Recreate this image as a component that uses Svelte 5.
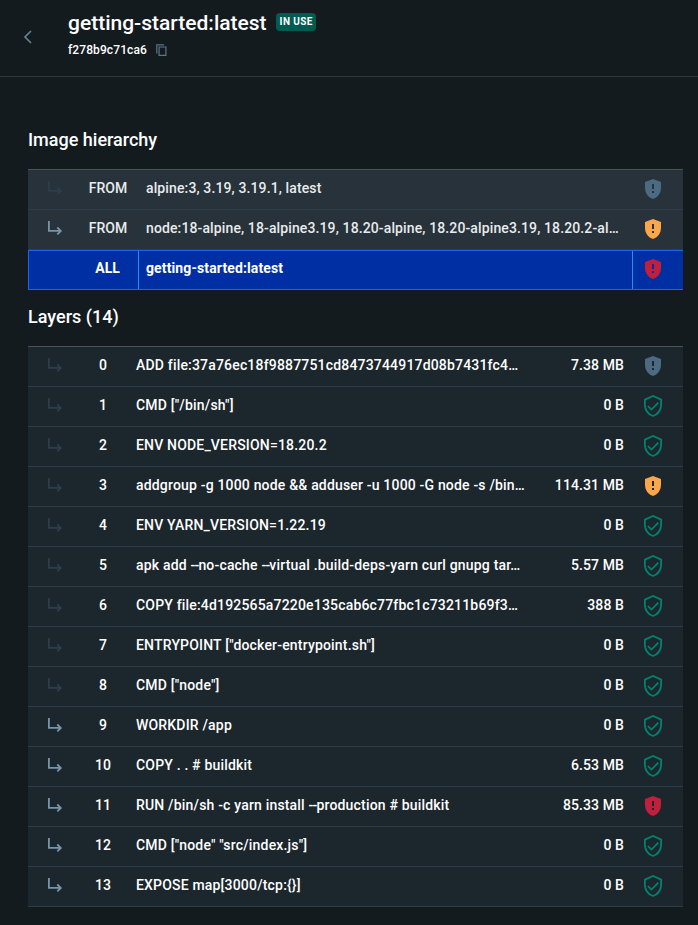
<script>
  const hierarchy = [
    { kind: 'FROM', name: 'alpine:3, 3.19, 3.19.1, latest', faded: true, status: 'unknown' },
    { kind: 'FROM', name: 'node:18-alpine, 18-alpine3.19, 18.20-alpine, 18.20-alpine3.19, 18.20.2-al…', status: 'warning' },
    { kind: 'ALL', name: 'getting-started:latest', selected: true, status: 'danger' }
  ];
  const layers = [
    ['ADD file:37a76ec18f9887751cd8473744917d08b7431fc4…', '7.38 MB', 'unknown'],
    ['CMD ["/bin/sh"]', '0 B', 'ok'],
    ['ENV NODE_VERSION=18.20.2', '0 B', 'ok'],
    ['addgroup -g 1000 node && adduser -u 1000 -G node -s /bin…', '114.31 MB', 'warning'],
    ['ENV YARN_VERSION=1.22.19', '0 B', 'ok'],
    ['apk add --no-cache --virtual .build-deps-yarn curl gnupg tar…', '5.57 MB', 'ok'],
    ['COPY file:4d192565a7220e135cab6c77fbc1c73211b69f3…', '388 B', 'ok'],
    ['ENTRYPOINT ["docker-entrypoint.sh"]', '0 B', 'ok'],
    ['CMD ["node"]', '0 B', 'ok'],
    ['WORKDIR /app', '0 B', 'ok'],
    ['COPY . . # buildkit', '6.53 MB', 'ok'],
    ['RUN /bin/sh -c yarn install --production # buildkit', '85.33 MB', 'danger'],
    ['CMD ["node" "src/index.js"]', '0 B', 'ok'],
    ['EXPOSE map[3000/tcp:{}]', '0 B', 'ok']
  ];
</script>

{#snippet arrow(faded)}
  <svg class="arrow" class:faded width="15" height="14" viewBox="0 0 15 14" fill="none" stroke="currentColor">
    <path d="M.9 0v9.900h12M9.300 6.500l3.500 3.400-3.500 3.400" stroke-width="1.800" />
  </svg>
{/snippet}

{#snippet shield(status)}
  <svg class="shield {status}" width="24" height="24" viewBox="0 0 24 24" fill="currentColor">
    {#if status === 'ok'}
      <path d="M12 2 3.900 5.600V11c0 5 3.400 9.700 8.100 11 4.700-1.300 8.100-6 8.100-11V5.600z" fill="none" stroke="currentColor" stroke-width="1.800" />
      <path d="m6.800 12 3.700 3.600L17.300 8.700" fill="none" stroke="currentColor" stroke-width="1.700" />
    {:else}
      <path fill-rule="evenodd" d="m12 2-8 3v6.090c0 5.050 3.410 9.760 8 10.910 4.590-1.150 8-5.860 8-10.910V5zM11 7h2v5h-2zM11 14h2v2h-2z" />
    {/if}
  </svg>
{/snippet}

<main>
  <header>
    <button class="back" aria-label="Back">
      <svg width="10" height="14" viewBox="0 0 10 14" fill="none" stroke="currentColor" stroke-width="1.700">
        <path d="M8 1 2 7l6 6" />
      </svg>
    </button>
    <div class="heading">
      <div class="title"><h1>getting-started:latest</h1><span class="badge">IN USE</span></div>
      <div class="digest">
        <span>f278b9c71ca6</span>
        <svg width="12" height="13" viewBox="0 0 12 13" fill="none" stroke="currentColor">
          <path d="M.8 9.500V.9H8M3.100 3h6.800v8.400H3.100z" stroke-width="1.200" />
        </svg>
      </div>
    </div>
  </header>

  <section class="hierarchy">
    <h2>Image hierarchy</h2>
    <div class="table">
      {#each hierarchy as row}
        <div class="row" class:selected={row.selected}>
          <span class="branch">{#if !row.selected}{@render arrow(row.faded)}{/if}</span>
          <span class="kind">{row.kind}</span>
          <span class="name">{row.name}</span>
          <span class="status">{@render shield(row.status)}</span>
        </div>
      {/each}
    </div>
  </section>

  <section class="layers">
    <h2>Layers (14)</h2>
    <div class="table">
      {#each layers as [command, size, status], i}
        <div class="row">
          <span class="branch">{@render arrow(i < 9)}</span>
          <span class="index">{i}</span>
          <span class="command">{#each command.split('--') as part, p}{#if p > 0}<span class="flag">--</span>{/if}{part}{/each}</span>
          <span class="size">{size}</span>
          <span class="status">{@render shield(status)}</span>
        </div>
      {/each}
    </div>
  </section>
</main>

<style>
  :global(body) { margin: 0; background: #141b1f; }
  main {
    height: 925px;
    box-sizing: border-box;
    overflow: hidden;
    background: #141b1f;
    color: #fff;
    font: 500 14px/20px Roboto, sans-serif;
  }
  header {
    display: flex;
    height: 76px;
    border-bottom: 1px solid #30363a;
  }
  .back {
    width: 68px;
    margin: 0;
    padding: 0 0 3px 23px;
    border: 0;
    background: none;
    color: #677f95;
    text-align: left;
  }
  .back svg { display: block; }
  .heading { padding-top: 10px; }
  .title { display: flex; align-items: center; gap: 9px; height: 25px; }
  h1, h2 { margin: 0; font-weight: 500; white-space: nowrap; }
  h1 { font-size: 21px; }
  .badge {
    height: 18px;
    padding: 0 3.500px 0 4px;
    border-radius: 4px;
    background: #005c51;
    font-size: 10px;
    line-height: 18px;
    font-weight: 700;
    letter-spacing: .4px;
    margin-top: -2px;
  }
  .digest { display: flex; align-items: center; gap: 9px; height: 16px; margin-top: 7px; font-size: 12px; letter-spacing: .1px; }
  .digest svg { color: #5b7488; }
  section { width: 655px; margin-left: 28px; }
  .hierarchy { padding-top: 50px; }
  .layers { padding-top: 14px; }
  h2 { height: 26px; font-size: 18px; line-height: 26px; margin-bottom: 16px; }
  .table { border-top: 1px solid #4b5154; }
  .row {
    display: flex;
    align-items: center;
    height: 39px;
    border-bottom: 1px solid #2c3e4b;
    background: #1c262d;
    white-space: nowrap;
  }
  .hierarchy .row { background: #27323b; color: #e9ebec; }
  .hierarchy .row.selected {
    height: 38px;
    background: #002ea3;
    border: 1px solid #1d63ed;
    border-right: 0;
    color: #fff;
    font-weight: 700;
  }
  .row > span { padding-bottom: 4px; }
  .row > .branch { width: 34px; padding: 0 0 3px 20px; color: #7794ab; }
  .arrow { display: block; }
  .arrow.faded { color: #2c3e4b; }
  .kind { width: 52px; text-align: center; }
  .name { flex: 1; padding-left: 12px; letter-spacing: .12px; }
  .index { width: 42px; text-align: center; }
  .command { flex: 1; padding-left: 12px; letter-spacing: .18px; }
  .flag { letter-spacing: -.8px; }
  .size { text-align: right; letter-spacing: .1px; }
  .row > .status { width: 24px; padding: 0 18px 1px 17px; }
  .shield { display: block; }
  .selected > .branch { width: 33px; }
  .selected > .kind { width: 51px; padding-right: 1px; margin-right: 4px; }
  .row.selected > .name {
    align-self: stretch;
    padding: 7px 0 0 7px;
    border-left: 1px solid #2e8cf0;
  }
  .row.selected > .status {
    align-self: stretch;
    padding: 6px 18px 0 8px;
    margin-left: 8px;
    border-left: 1px solid #2e8cf0;
  }
  .row.selected > .name { margin-right: 0; }
  .unknown { color: #4d6a83; }
  .warning { color: #fba64b; }
  .danger { color: #c1203c; }
  .ok { color: #008471; }
</style>
